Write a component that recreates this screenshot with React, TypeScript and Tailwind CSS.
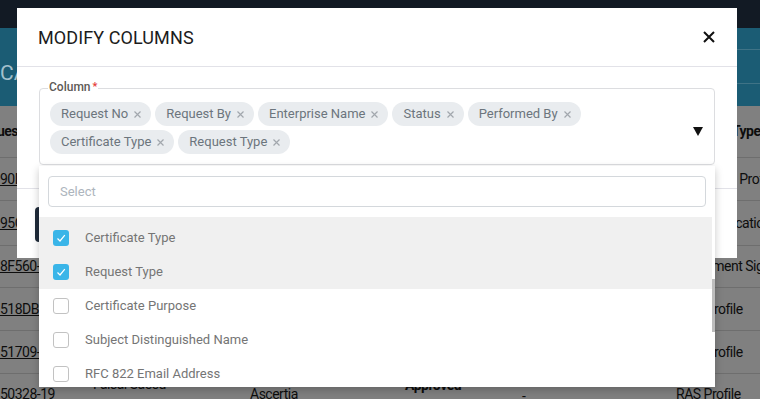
import React from "react";

const rows = [
  { id: "90DA1-17", by: "Faisal Saeed", ent: "Ascertia", status: "Approved", perf: "-", type: "Document Profile", pad: "pl-0", h: "h-[43px]" },
  { id: "95C3E-18", by: "Faisal Saeed", ent: "Ascertia", status: "Approved", perf: "-", type: "Authentication", pad: "pl-[11px]", h: "h-[45px]" },
  { id: "8F560-12", by: "Faisal Saeed", ent: "Ascertia", status: "Approved", perf: "-", type: "Document Signing", pad: "pl-[6px]", h: "h-[42px]" },
  { id: "518DB-15", by: "Faisal Saeed", ent: "Ascertia", status: "Approved", perf: "-", type: "RAS Profile", pad: "pl-[2px]", h: "h-[43px]" },
  { id: "51709-16", by: "Faisal Saeed", ent: "Ascertia", status: "Approved", perf: "-", type: "RAS Profile", pad: "pl-[2px]", h: "h-[43px]" },
];

const chipsRow = ["Request No", "Request By", "Enterprise Name", "Status", "Performed By", "Certificate Type", "Request Type"];

const options = [
  { label: "Certificate Type", checked: true },
  { label: "Request Type", checked: true },
  { label: "Certificate Purpose", checked: false },
  { label: "Subject Distinguished Name", checked: false },
  { label: "RFC 822 Email Address", checked: false },
];

function SmallX({ size = 7, className = "" }: { size?: number; className?: string }) {
  return (
    <svg width={size} height={size} viewBox="0 0 7 7" className={className}>
      <path d="M0.5 0.5 L6.5 6.5 M6.5 0.5 L0.5 6.5" stroke="currentColor" strokeWidth="1.2" fill="none" />
    </svg>
  );
}

export default function App() {
  return (
    <div className="relative w-[760px] h-[399px] overflow-hidden bg-[#808080] font-['Roboto',sans-serif]">
      {/* background page (dimmed) */}
      <div className="flex flex-col">
        <div className="h-[28px] bg-[#121a24]" />
        <div className="h-[78px] bg-[#1b5c74] flex">
          <div className="flex-1 flex items-center pt-[12px]">
            <span className="text-[21px] text-[#a3c0cc] leading-none whitespace-nowrap">CA REQUESTS</span>
          </div>
          <div className="w-[160px] flex flex-col">
            <div className="h-[22px] border-b border-[#3f7386]" />
            <div className="h-[34px] border-b border-[#3f7386]" />
          </div>
        </div>
        <div className="h-[52px] border-b border-[#6e6e6e] flex items-center text-[14px] tracking-[-0.5px] font-bold text-[#0d0d0d] whitespace-nowrap">
          <div className="w-[93px] overflow-hidden"><span className="ml-[-26px] block">Request No</span></div>
          <div className="w-[157px]">Requested By</div>
          <div className="w-[155px]">Enterprise</div>
          <div className="w-[117px]">Status</div>
          <div className="w-[154px]">Performed By</div>
          <div className="w-[84px] pl-[15px]">Profile Type</div>
        </div>
        {rows.map((r, i) => (
          <div key={i} className={`${r.h} border-b border-[#6e6e6e] flex items-center text-[14px] tracking-[-0.5px] text-[#0d0d0d] whitespace-nowrap`}>
            <div className="w-[93px] underline">{r.id}</div>
            <div className="w-[157px]">{r.by}</div>
            <div className="w-[155px]">{r.ent}</div>
            <div className="w-[117px] font-bold">{r.status}</div>
            <div className="w-[154px]">{r.perf}</div>
            <div className={`w-[84px] ${r.pad}`}>{r.type}</div>
          </div>
        ))}
        <div className="h-[40px] flex items-center text-[14px] tracking-[-0.5px] text-[#0d0d0d] whitespace-nowrap leading-[18px]">
          <div className="w-[93px] underline">50328-19</div>
          <div className="w-[157px] self-start pt-[1px]">Faisal Saeed</div>
          <div className="w-[155px]">Ascertia</div>
          <div className="w-[117px] self-start pt-[2px] font-bold">Approved</div>
          <div className="w-[154px] pt-[3px]">-</div>
          <div className="w-[84px]">RAS Profile</div>
        </div>
      </div>

      {/* modal */}
      <div className="absolute left-[17px] top-[8px] w-[720px] h-[250px] bg-white flex flex-col">
        <div className="h-[59px] border-b border-[#e2e2e8] flex items-center justify-between pl-[21px] pr-[22px]">
          <span className="text-[18px] text-[#1c1c1c] tracking-[0.1px]">MODIFY COLUMNS</span>
          <svg width="12" height="12" viewBox="0 0 12 12" className="text-[#111]">
            <path d="M1 1 L11 11 M11 1 L1 11" stroke="currentColor" strokeWidth="2" fill="none" />
          </svg>
        </div>
        <div className="h-[121px] px-[22px] pt-[21px]">
          <div className="relative h-[77px] border border-[#dcdde0] rounded-[4px]">
            <div className="absolute -top-[9px] left-[8px] bg-white px-[1px] text-[12px] leading-[14px] font-medium text-[#5e5a56] flex items-center">
              Column<span className="text-[#e53935] ml-[2px] text-[11px]">*</span>
            </div>
            <div className="pt-[13px] pl-[10px] pr-[40px] flex flex-wrap gap-[4px]">
              {chipsRow.map((c) => (
                <div key={c} className="h-[24px] rounded-full bg-[#e9ecef] pl-[11px] pr-[10px] flex items-center gap-[6px] text-[13px] text-[#6c757d] whitespace-nowrap">
                  <span>{c}</span>
                  <SmallX className="text-[#a2a7ad]" />
                </div>
              ))}
            </div>
            <svg width="10" height="9" viewBox="0 0 10 9" className="absolute right-[11px] top-[38px]">
              <polygon points="0,0 10,0 5,9" fill="#111" />
            </svg>
          </div>
        </div>
        <div className="flex-1 border-t border-[#e2e2e8] pl-[18px] pt-[18px]">
          <button className="h-[35px] px-[22px] rounded-[4px] bg-[#1f2b3a] text-white text-[14px]">Save</button>
        </div>
      </div>

      {/* dropdown */}
      <div className="absolute left-[39px] top-[166px] w-[676px] h-[221px] bg-white shadow-[0_3px_8px_rgba(0,0,0,0.22)] flex flex-col overflow-hidden">
        <div className="px-[9px] pt-[10px]">
          <div className="h-[31px] border border-[#d4d8dc] rounded-[4px] pl-[11px] flex items-center text-[13px] text-[#adb5bd]">
            Select
          </div>
        </div>
        <div className="relative mt-[10px] flex-1 overflow-hidden">
          <div className="w-[673px] flex flex-col">
            {options.map((o, i) => (
              <div
                key={o.label}
                className={`${i === 0 ? "h-[38px] pt-[4px]" : "h-[34px]"} ${o.checked ? "bg-[#f0f0f0]" : "bg-white"} flex items-center pl-[14px] gap-[16px] shrink-0`}
              >
                {o.checked ? (
                  <div className="w-[16px] h-[16px] rounded-[3px] bg-[#3ab5e8] flex items-center justify-center">
                    <svg width="12" height="12" viewBox="0 0 12 12">
                      <path d="M2.5 6.5 L5 9 L9.8 3.2" stroke="white" strokeWidth="1.2" fill="none" />
                    </svg>
                  </div>
                ) : (
                  <div className="w-[16px] h-[16px] rounded-[3px] border border-[#c2c2c2] bg-white" />
                )}
                <span className="text-[13px] text-[#757575] whitespace-nowrap">{o.label}</span>
              </div>
            ))}
          </div>
          <div className="absolute left-[673px] top-[62px] w-[3px] h-[53px] bg-[#bdbdbd]" />
        </div>
      </div>
    </div>
  );
}
